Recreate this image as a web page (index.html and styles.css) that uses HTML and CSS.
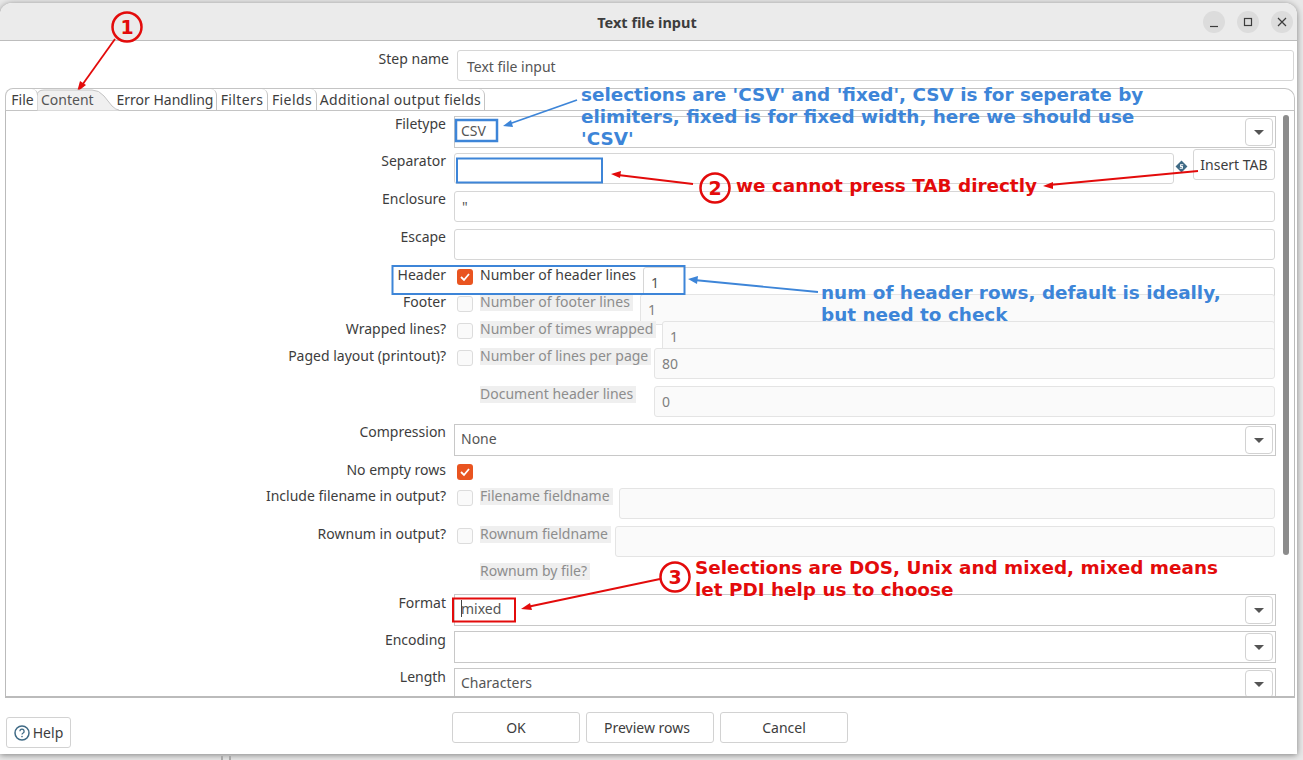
FILE: index.html
```html
<!DOCTYPE html>
<html lang="en">
<head>
    <meta charset="UTF-8">
    <title>Text file input</title>
    <link rel="stylesheet" href="styles.css">
</head>
<body>
    <div class="window">
        <div class="titlebar">
            <span class="title">Text file input</span>
            <div class="win-btns">
                <span class="win-btn"><svg width="12" height="12" viewBox="0 0 12 12"><path d="M2 10.5h8" stroke="#3c3c3c" stroke-width="1.2"/></svg></span>
                <span class="win-btn"><svg width="12" height="12" viewBox="0 0 12 12"><rect x="2.5" y="2.5" width="7" height="7" fill="none" stroke="#3c3c3c" stroke-width="1.2"/></svg></span>
                <span class="win-btn"><svg width="12" height="12" viewBox="0 0 12 12"><path d="M2 2l8 8M10 2l-8 8" stroke="#3c3c3c" stroke-width="1.2"/></svg></span>
            </div>
        </div>

        <div class="stepname">
            <label class="lbl">Step name</label>
            <div class="input">Text file input</div>
        </div>

        <div class="tabs">
            <span class="tab tab-file">File</span>
            <span class="tab tab-content">
                <svg class="tab-shape" width="82" height="22" viewBox="0 0 82 22"><path d="M0 22V7Q0 1 7 1H55Q62 1 67 7L75 17Q79 21 82 21V22Z" fill="#f0f0f0" stroke="#c4c4c4"/></svg>
                <span class="tab-text">Content</span>
            </span>
            <span class="tab tab-error">Error Handling</span>
            <span class="tab tab-filters">Filters</span>
            <span class="tab tab-fields">Fields</span>
            <span class="tab tab-extra">Additional output fields</span>
        </div>

        <div class="panel">
            <div class="form">
                <div class="row row-first">
                    <label class="lbl">Filetype</label>
                    <div class="combo"><span class="combo-val">CSV</span><span class="combo-btn"><i class="caret"></i></span></div>
                </div>
                <div class="row">
                    <label class="lbl">Separator</label>
                    <div class="input"></div>
                    <span class="var-icon"><svg width="13" height="13" viewBox="0 0 12 12"><path d="M6 .5L11.5 6 6 11.5.5 6z" fill="#3f6a85"/><path d="M7.600 4.400H5.200v1.600h1.600v1.600H4.400" fill="none" stroke="#fff" stroke-width="1"/></svg></span>
                    <button class="tab-btn">Insert TAB</button>
                </div>
                <div class="row">
                    <label class="lbl">Enclosure</label>
                    <div class="input">"</div>
                </div>
                <div class="row">
                    <label class="lbl">Escape</label>
                    <div class="input"></div>
                </div>
                <div class="row row-tight">
                    <label class="lbl">Header</label>
                    <span class="check on"><svg width="16" height="16" viewBox="0 0 16 16"><path d="M4 8l3 3 5-6" fill="none" stroke="#fff" stroke-width="1.8"/></svg></span>
                    <span class="sub sub-header"><span>Number of header lines</span></span>
                    <div class="input">1</div>
                </div>
                <div class="row row-tight">
                    <label class="lbl">Footer</label>
                    <span class="check"></span>
                    <span class="sub sub-footer off"><span>Number of footer lines</span></span>
                    <div class="input dis">1</div>
                </div>
                <div class="row row-tight">
                    <label class="lbl">Wrapped lines?</label>
                    <span class="check"></span>
                    <span class="sub sub-wrap off"><span>Number of times wrapped</span></span>
                    <div class="input dis">1</div>
                </div>
                <div class="row">
                    <label class="lbl">Paged layout (printout)?</label>
                    <span class="check"></span>
                    <span class="sub sub-paged off"><span>Number of lines per page</span></span>
                    <div class="input dis">80</div>
                </div>
                <div class="row">
                    <label class="lbl"></label>
                    <span class="check blank"></span>
                    <span class="sub sub-paged off"><span>Document header lines</span></span>
                    <div class="input dis">0</div>
                </div>
                <div class="row">
                    <label class="lbl">Compression</label>
                    <div class="combo"><span class="combo-val">None</span><span class="combo-btn"><i class="caret"></i></span></div>
                </div>
                <div class="row row-short">
                    <label class="lbl">No empty rows</label>
                    <span class="check on"><svg width="16" height="16" viewBox="0 0 16 16"><path d="M4 8l3 3 5-6" fill="none" stroke="#fff" stroke-width="1.8"/></svg></span>
                </div>
                <div class="row">
                    <label class="lbl">Include filename in output?</label>
                    <span class="check"></span>
                    <span class="sub sub-filename off"><span>Filename fieldname</span></span>
                    <div class="input dis"></div>
                </div>
                <div class="row">
                    <label class="lbl">Rownum in output?</label>
                    <span class="check"></span>
                    <span class="sub sub-rownum off"><span>Rownum fieldname</span></span>
                    <div class="input dis"></div>
                </div>
                <div class="row row-by-file">
                    <label class="lbl"></label>
                    <span class="check blank"></span>
                    <span class="sub off"><span>Rownum by file?</span></span>
                </div>
                <div class="row row-close">
                    <label class="lbl">Format</label>
                    <div class="combo"><span class="combo-val cursor">mixed</span><span class="combo-btn"><i class="caret"></i></span></div>
                </div>
                <div class="row row-close">
                    <label class="lbl">Encoding</label>
                    <div class="combo"><span class="combo-val"></span><span class="combo-btn"><i class="caret"></i></span></div>
                </div>
                <div class="row row-close">
                    <label class="lbl">Length</label>
                    <div class="combo"><span class="combo-val">Characters</span><span class="combo-btn"><i class="caret"></i></span></div>
                </div>
            </div>
            <div class="scrollbar"><div class="thumb"></div></div>
        </div>

        <div class="footer">
            <button class="btn help">
                <svg width="16" height="16" viewBox="0 0 16 16"><circle cx="8" cy="8" r="7" fill="none" stroke="#3f6a85" stroke-width="1.5"/><path d="M5.900 6.200a2.100 2.100 0 1 1 3.200 1.800c-.7.400-1.100.8-1.100 1.600" fill="none" stroke="#3f6a85" stroke-width="1.300"/><circle cx="8" cy="11.600" r=".8" fill="#3f6a85"/></svg>
                Help
            </button>
            <button class="btn action first">OK</button>
            <button class="btn action preview">Preview rows</button>
            <button class="btn action">Cancel</button>
        </div>
    </div>
    <div class="behind"></div>

    <!-- annotations drawn on top of the screenshot -->
    <svg class="marks" width="1303" height="760" viewBox="0 0 1303 760">
        <g fill="none" stroke-width="2.5">
            <circle cx="127" cy="27" r="14.5" stroke="#e30b0b"/>
            <circle cx="715" cy="188" r="14.5" stroke="#e30b0b"/>
            <circle cx="675" cy="577" r="14.5" stroke="#e30b0b"/>
            <rect x="456" y="120" width="41" height="21" stroke="#3d85d8"/>
            <rect x="457" y="158.500" width="145" height="24" stroke="#3d85d8" stroke-width="2"/>
            <rect x="392.500" y="266" width="292" height="28" stroke="#3d85d8" stroke-width="2"/>
            <rect x="453" y="598.500" width="62" height="23" stroke="#e30b0b" stroke-width="2"/>
        </g>
        <g stroke-width="1.800">
            <path d="M115 39L80 88" stroke="#e30b0b"/>
            <path d="M693 184L618 175" stroke="#e30b0b"/>
            <path d="M1198 171L1049 185" stroke="#e30b0b"/>
            <path d="M660 579L527 607" stroke="#e30b0b"/>
            <path d="M577 100L509 124" stroke="#3d85d8"/>
            <path d="M818 292L694 280" stroke="#3d85d8"/>
        </g>
        <polygon points="77,92 80,81 86,85" fill="#e30b0b"/>
        <polygon points="611,174 621,171 620,178" fill="#e30b0b"/>
        <polygon points="1043,186 1053,182 1053,189" fill="#e30b0b"/>
        <polygon points="521,609 530,603 532,610" fill="#e30b0b"/>
        <polygon points="503,126 511,120 513,127" fill="#3d85d8"/>
        <polygon points="688,279 698,276 697,284" fill="#3d85d8"/>
        <g class="mark-num">
            <text x="127" y="34">1</text>
            <text x="715" y="195">2</text>
            <text x="675" y="584">3</text>
        </g>
    </svg>
    <div class="note blue note-type">selections are 'CSV' and 'fixed', CSV is for seperate by<br>elimiters, fixed is for fixed width, here we should use<br>'CSV'</div>
    <div class="note red note-tab">we cannot press TAB directly</div>
    <div class="note blue note-header">num of header rows, default is ideally,<br>but need to check</div>
    <div class="note red note-format">Selections are DOS, Unix and mixed, mixed means<br>let PDI help us to choose</div>
</body>
</html>
```
FILE: styles.css
```css
* {
    margin: 0;
    padding: 0;
    box-sizing: border-box;
}

body {
    width: 1303px;
    height: 760px;
    overflow: hidden;
    background: #e8e8e8;
    font-family: "Noto Sans", sans-serif;
    font-size: 14px;
    color: #3d3d3d;
    padding-top: 3px;
}

.window {
    width: 1297px;
    height: 751px;
    background: #fff;
    border-radius: 12px 12px 0 0;
    box-shadow: 0 1px 6px rgba(0, 0, 0, 0.45);
}

.behind {
    position: absolute;
    left: 221px;
    top: 756px;
    width: 10px;
    height: 4px;
    border-left: 2px solid #a8a8a8;
    border-right: 2px solid #a8a8a8;
}

.titlebar {
    height: 38px;
    background: #ebebeb;
    border-bottom: 1px solid #bdbdbd;
    border-radius: 12px 12px 0 0;
    display: flex;
    justify-content: center;
    align-items: center;
    position: relative;
}

.title {
    font-weight: 700;
    font-size: 14.5px;
    margin-right: 3px;
}

.win-btns {
    position: absolute;
    right: 4px;
    top: 8px;
    display: flex;
    gap: 12px;
}

.win-btn {
    width: 22px;
    height: 22px;
    border-radius: 50%;
    background: #dcdcdc;
    display: flex;
    align-items: center;
    justify-content: center;
}

.lbl {
    width: 446px;
    flex: none;
    text-align: right;
    line-height: 16px;
}

.input {
    flex: 1;
    height: 31px;
    background: #fff;
    border: 1px solid #d6d6d6;
    border-radius: 3px;
    padding: 0 7px;
    line-height: 29px;
    color: #555;
    min-width: 0;
}

.input.dis {
    background: #fafafa;
    border-color: #e4e4e4;
    color: #808080;
}

.stepname {
    display: flex;
    align-items: flex-start;
    margin-top: 9px;
    padding-right: 3px;
}

.stepname .lbl {
    width: 449px;
    margin-top: 1px;
    margin-right: 8px;
}

.stepname .input {
    padding-left: 9px;
    line-height: 31px;
}

.tabs {
    display: flex;
    height: 22px;
    margin: 7px 0 0 5px;
    width: 1290px;
    padding-left: 2px;
    border: 1px solid #c4c4c4;
    border-bottom: none;
    border-radius: 8px 10px 0 0;
    position: relative;
}

.tab {
    height: 21px;
    line-height: 21px;
    border-right: 1px solid #c4c4c4;
    border-radius: 0 6px 0 0;
    text-align: center;
    flex: none;
    white-space: nowrap;
}

.tab-file { width: 30px; }
.tab-error { width: 103px; margin-left: -5px; position: relative; }
.tab-filters { width: 51px; letter-spacing: 0.4px; }
.tab-fields { width: 49px; letter-spacing: 0.4px; }
.tab-extra { width: 168px; letter-spacing: 0.3px; }

.tab-content {
    width: 81px;
    border-right: none;
    position: relative;
    z-index: 1;
    text-align: left;
    color: #555;
}

.tab-shape {
    position: absolute;
    left: -1px;
    top: 0;
}

.tab-text {
    position: relative;
    margin-left: 3px;
}

.panel {
    width: 1290px;
    height: 588px;
    margin-left: 5px;
    border: 1px solid #bbb;
    border-top-color: #c4c4c4;
    border-bottom-width: 2px;
    display: flex;
    overflow: hidden;
}

.form {
    width: 1269px;
    flex: none;
    padding-top: 5px;
}

.row {
    display: flex;
    align-items: flex-start;
    height: 31px;
    margin-bottom: 7px;
}

.row .lbl {
    width: 440px;
    margin-right: 8px;
}

.row-first {
    margin-bottom: 6px;
}

.row-tight {
    margin-bottom: -4px;
}

.row-short {
    height: 19px;
}

.row-by-file {
    height: 25px;
    margin-top: -1px;
}

.row-close {
    margin-bottom: 6px;
}

.combo {
    flex: 1;
    height: 32px;
    margin-right: -1px;
    border: 1px solid #c8c8c8;
    display: flex;
    align-items: center;
    justify-content: space-between;
    padding: 2px;
    color: #555;
    background: #fff;
}

.row-close .combo {
    margin-top: -1px;
}

.combo-val {
    padding-left: 4px;
    margin-top: -4px;
    position: relative;
}

.cursor::before {
    content: "";
    position: absolute;
    left: 4px;
    top: 1px;
    width: 1px;
    height: 17px;
    background: #444;
}

.combo-btn {
    width: 28px;
    height: 28px;
    border: 1px solid #d2d2d2;
    border-radius: 4px;
    display: flex;
    align-items: center;
    justify-content: center;
}

.caret {
    width: 0;
    height: 0;
    border-left: 5px solid transparent;
    border-right: 5px solid transparent;
    border-top: 5px solid #555;
}

.var-icon {
    width: 19px;
    flex: none;
    padding: 5px 0 0 1px;
}

.tab-btn {
    width: 82px;
    height: 31px;
    flex: none;
    margin-top: -4px;
    background: #fff;
    border: 1px solid #d6d6d6;
    border-radius: 3px;
    font: inherit;
    color: #3d3d3d;
}

.check {
    width: 16px;
    height: 16px;
    flex: none;
    border: 1px solid #dcdcdc;
    border-radius: 3px;
    background: #fafafa;
    margin: 2px 7px 0 3px;
}

.check.on {
    background: #e95420;
    border: none;
}

.check.on svg {
    display: block;
}

.check.blank {
    visibility: hidden;
}

.sub {
    flex: none;
    line-height: 16px;
    white-space: nowrap;
}

.sub-header { width: 163px; }
.sub-footer { width: 160px; }
.sub-wrap { width: 182px; }
.sub-paged { width: 174px; }
.sub-filename { width: 139px; }
.sub-rownum { width: 135px; }

.sub.off span {
    color: #8d8d8d;
    background: #efefef;
    padding-right: 3px;
    display: inline-block;
    height: 17px;
}

.scrollbar {
    flex: 1;
    padding: 4px 0 0 8px;
}

.thumb {
    width: 6px;
    height: 440px;
    border-radius: 3px;
    background: #8c8c8c;
}

.footer {
    display: flex;
    align-items: flex-start;
    padding-top: 14px;
}

.btn {
    height: 31px;
    background: #fff;
    border: 1px solid #d2d2d2;
    border-radius: 3px;
    font: inherit;
    color: #3d3d3d;
}

.help {
    width: 65px;
    margin: 5px 0 0 6px;
    display: flex;
    align-items: center;
    justify-content: center;
    gap: 3px;
}

.action {
    width: 128px;
    margin-left: 6px;
}

.action.first {
    margin-left: 381px;
}

.action.preview {
    padding-right: 6px;
}

.marks {
    position: absolute;
    left: 0;
    top: 0;
}

.mark-num {
    font-family: "DejaVu Sans", sans-serif;
    font-weight: 700;
    font-size: 19px;
    fill: #e30b0b;
    text-anchor: middle;
}

.note {
    position: absolute;
    font-family: "DejaVu Sans", sans-serif;
    font-weight: 700;
    font-size: 18.4px;
    line-height: 22px;
    white-space: nowrap;
}

.blue { color: #3d85d8; }
.red { color: #e30b0b; }

.note-type { left: 581px; top: 84px; }
.note-tab { left: 736px; top: 175px; }
.note-header { left: 821px; top: 282px; }
.note-format { left: 695px; top: 557px; }
```
